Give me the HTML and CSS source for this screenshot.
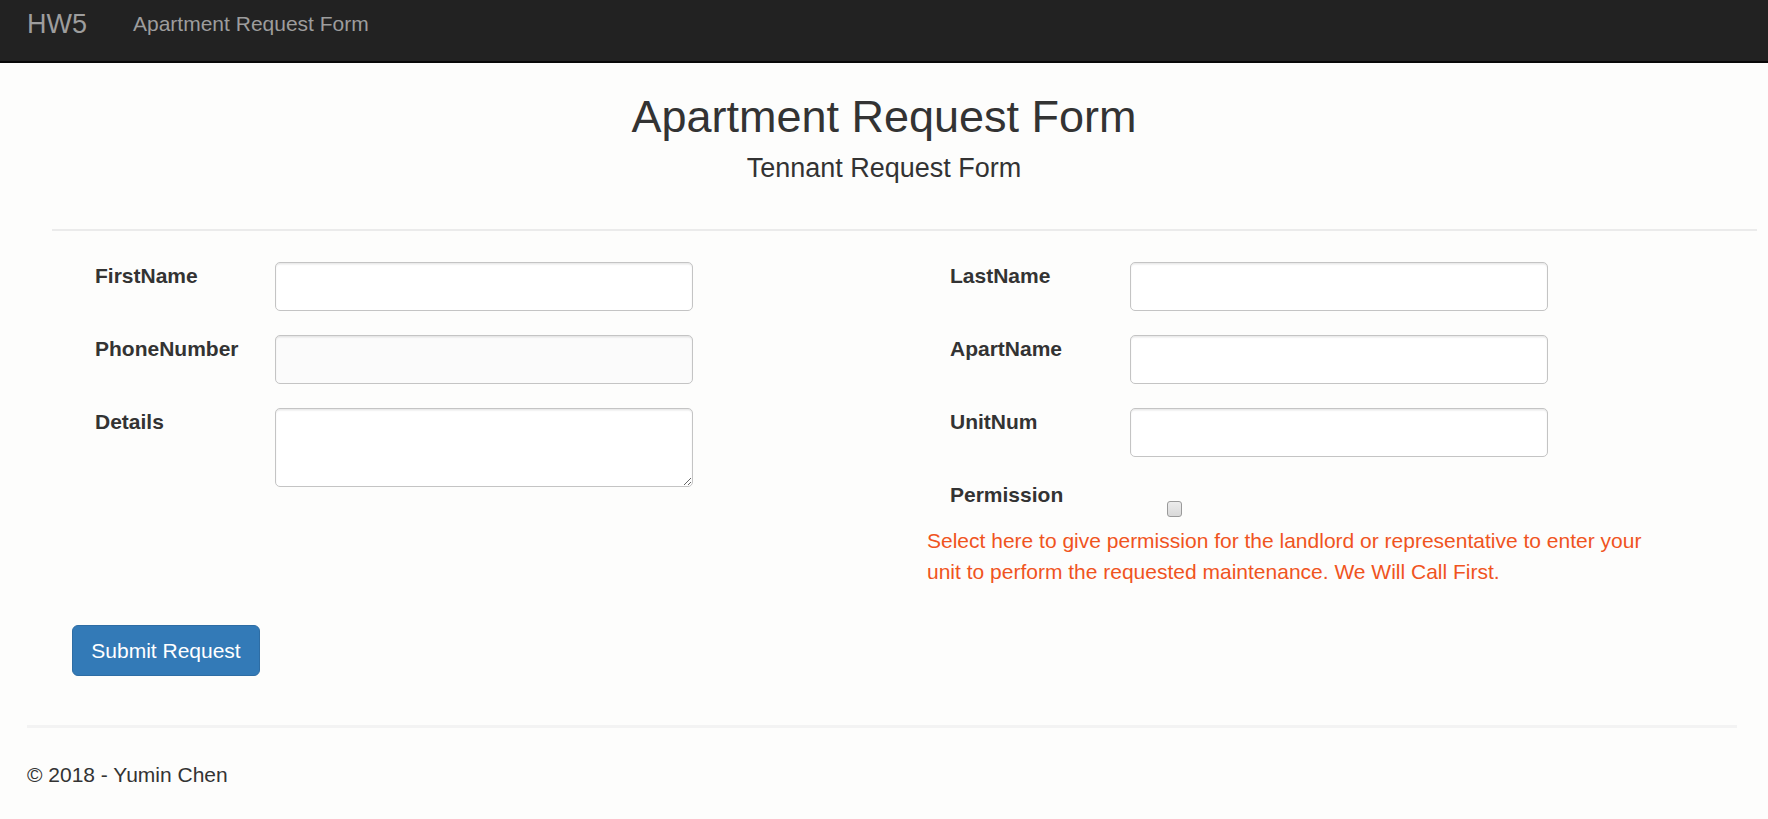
FILE: index.html
```html
<!DOCTYPE html>
<html lang="en">
<head>
<meta charset="utf-8">
<title>Apartment Request Form - HW5</title>
<link rel="stylesheet" href="styles.css">
</head>
<body>
<nav class="navbar">
  <span class="brand">HW5</span>
  <a class="nav-link" href="#">Apartment Request Form</a>
</nav>
<main class="page">
  <header class="hero">
    <h2 class="title">Apartment Request Form</h2>
    <h4 class="subtitle">Tennant Request Form</h4>
  </header>
  <hr class="divider">
  <form class="request-form">
    <div class="columns">
      <div class="col col-left">
        <div class="field">
          <label class="label">FirstName</label>
          <input class="control" type="text">
        </div>
        <div class="field">
          <label class="label">PhoneNumber</label>
          <input class="control control-tint" type="text">
        </div>
        <div class="field">
          <label class="label">Details</label>
          <textarea class="control control-area"></textarea>
        </div>
      </div>
      <div class="col col-right">
        <div class="field">
          <label class="label">LastName</label>
          <input class="control" type="text">
        </div>
        <div class="field">
          <label class="label">ApartName</label>
          <input class="control" type="text">
        </div>
        <div class="field">
          <label class="label">UnitNum</label>
          <input class="control" type="text">
        </div>
        <div class="field field-check">
          <label class="label">Permission</label>
          <input class="check" type="checkbox">
        </div>
        <p class="permission-note">Select here to give permission for the landlord or representative to enter your unit to perform the requested maintenance. We Will Call First.</p>
      </div>
    </div>
    <button class="btn-submit" type="button">Submit Request</button>
  </form>
  <hr class="footer-rule">
  <footer class="footer">© 2018 - Yumin Chen</footer>
</main>
</body>
</html>
```

FILE: styles.css
```css
html, body {
  margin: 0;
  padding: 0;
}

body {
  background: #fdfdfc;
  font-family: "Liberation Sans", Arial, Helvetica, sans-serif;
  color: #333333;
  font-size: 21px;
}

.navbar {
  display: flex;
  align-items: flex-start;
  height: 61px;
  background: #222222;
  border-bottom: 2px solid #080808;
  padding-left: 27px;
}

.brand {
  font-size: 27px;
  line-height: 48px;
  color: #9d9d9d;
}

.nav-link {
  margin-left: 46px;
  font-size: 21px;
  line-height: 48px;
  color: #9d9d9d;
  text-decoration: none;
}

.page {
  display: flex;
  flex-direction: column;
}

.hero {
  display: flex;
  flex-direction: column;
  align-items: center;
  padding-top: 29px;
}

.title {
  margin: 0;
  font-size: 45px;
  font-weight: 400;
  line-height: 50px;
  color: #333333;
}

.subtitle {
  margin: 11px 0 0;
  font-size: 27px;
  font-weight: 400;
  line-height: 30px;
  color: #333333;
}

.divider {
  margin: 46px 11px 0 52px;
  border: 0;
  border-top: 2px solid #ebebeb;
  height: 0;
}

.request-form {
  display: flex;
  flex-direction: column;
  padding-top: 31px;
}

.columns {
  display: flex;
}

.col {
  display: flex;
  flex-direction: column;
}

.col-left {
  width: 950px;
  padding-left: 95px;
  box-sizing: border-box;
}

.col-right {
  width: 760px;
}

.field {
  display: flex;
  align-items: flex-start;
}

.field + .field {
  margin-top: 24px;
}

.label {
  width: 180px;
  flex: none;
  font-weight: 700;
  font-size: 21px;
  line-height: 28px;
  color: #333333;
}

.control {
  width: 418px;
  height: 49px;
  box-sizing: border-box;
  margin: 0;
  border: 1px solid #c4c4c4;
  border-radius: 5px;
  background: #ffffff;
  box-shadow: inset 0 1.5px 1.5px rgba(0, 0, 0, 0.09);
  font-family: inherit;
  font-size: 21px;
}

.control-tint {
  background: #fbfbfb;
}

.control-area {
  height: 79px;
  resize: vertical;
}

.check {
  -webkit-appearance: none;
  appearance: none;
  width: 15px;
  height: 16px;
  margin: 20px 0 0 37px;
  border: 1px solid #9a9a9a;
  border-radius: 3px;
  background: linear-gradient(#ececec, #d9d9d9);
  box-sizing: border-box;
}

.permission-note {
  margin: 8px 0 0 -23px;
  width: 740px;
  font-size: 21px;
  line-height: 31px;
  color: #f0541e;
}

.btn-submit {
  align-self: flex-start;
  margin: 38px 0 0 72px;
  width: 188px;
  height: 51px;
  padding: 0;
  border: 1px solid #2e6da4;
  border-radius: 6px;
  background: #337ab7;
  color: #ffffff;
  font-family: inherit;
  font-size: 21px;
  line-height: 30px;
}

.footer-rule {
  margin: 49px 31px 0 27px;
  border: 0;
  border-top: 3px solid #f3f3f3;
  height: 0;
}

.footer {
  margin: 32px 0 0 27px;
  font-size: 21px;
  line-height: 30px;
  color: #333333;
}
```
